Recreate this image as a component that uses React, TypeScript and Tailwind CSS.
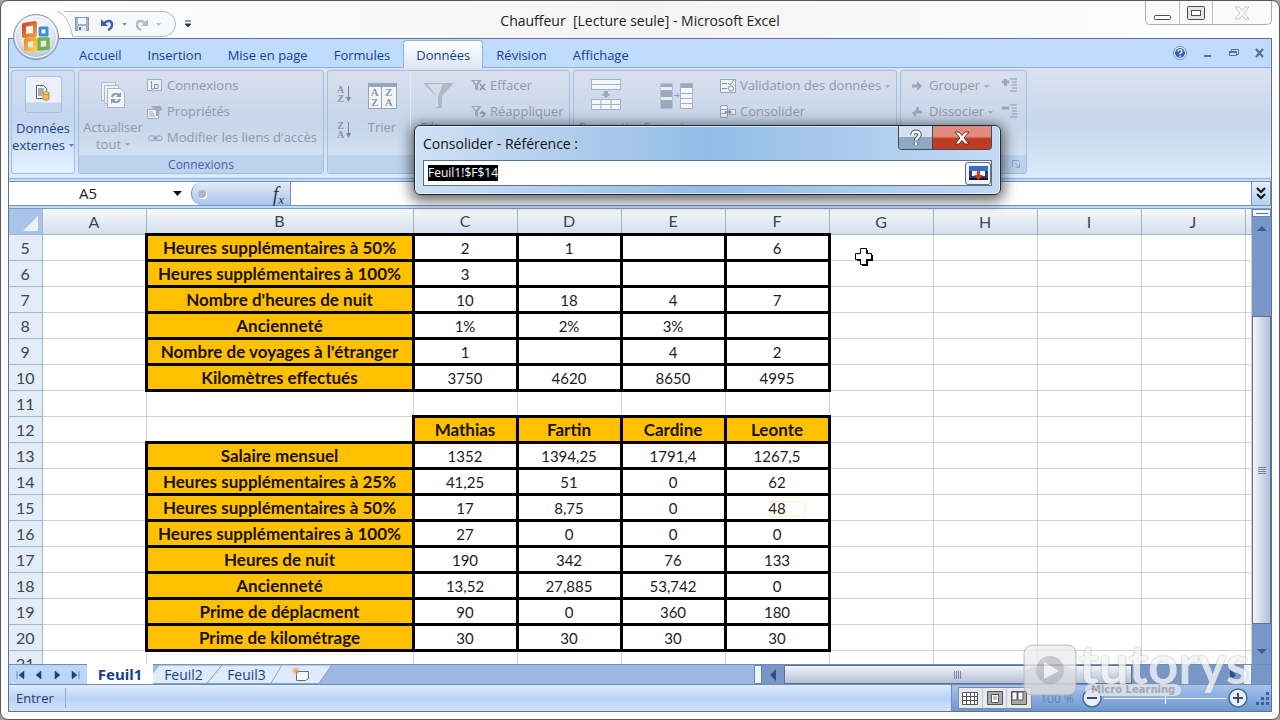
import React, { useEffect, useRef, useState } from "react";

const TABS = ["Accueil", "Insertion", "Mise en page", "Formules", "Données", "Révision", "Affichage"];
const COLUMNS = ["A", "B", "C", "D", "E", "F", "G", "H", "I", "J"];

interface Row {
  num: number;
  label?: string;
  values?: string[];
  header?: boolean;
}

const ROWS: Row[] = [
  { num: 5, label: "Heures supplémentaires à 50%", values: ["2", "1", "", "6"] },
  { num: 6, label: "Heures supplémentaires à 100%", values: ["3", "", "", ""] },
  { num: 7, label: "Nombre d'heures de nuit", values: ["10", "18", "4", "7"] },
  { num: 8, label: "Ancienneté", values: ["1%", "2%", "3%", ""] },
  { num: 9, label: "Nombre de voyages à l'étranger", values: ["1", "", "4", "2"] },
  { num: 10, label: "Kilomètres effectués", values: ["3750", "4620", "8650", "4995"] },
  { num: 11 },
  { num: 12, values: ["Mathias", "Fartin", "Cardine", "Leonte"], header: true },
  { num: 13, label: "Salaire mensuel", values: ["1352", "1394,25", "1791,4", "1267,5"] },
  { num: 14, label: "Heures supplémentaires à 25%", values: ["41,25", "51", "0", "62"] },
  { num: 15, label: "Heures supplémentaires à 50%", values: ["17", "8,75", "0", "48"] },
  { num: 16, label: "Heures supplémentaires à 100%", values: ["27", "0", "0", "0"] },
  { num: 17, label: "Heures de nuit", values: ["190", "342", "76", "133"] },
  { num: 18, label: "Ancienneté", values: ["13,52", "27,885", "53,742", "0"] },
  { num: 19, label: "Prime de déplacment", values: ["90", "0", "360", "180"] },
  { num: 20, label: "Prime de kilométrage", values: ["30", "30", "30", "30"] },
  { num: 21 },
];

export default function App() {
  return (
    <div className="h-screen min-h-[480px] overflow-hidden bg-neutral-400 font-['Open_Sans','Noto_Sans',sans-serif] text-[13px] text-[#15428b]">
      <div className="relative flex h-full flex-col rounded-lg border border-[#55585c] bg-[#fdfdfd] px-[7px] pb-[7px]">
        <TitleBar />
        <div className="flex min-h-0 flex-1 flex-col border border-[#5e7390] bg-[#bfdbff]">
          <RibbonTabs />
          <Ribbon />
          <FormulaBar />
          <div className="flex min-h-0 flex-1">
            <div className="min-w-0 flex-1 overflow-hidden bg-white">
              <Sheet />
            </div>
            <VerticalScrollbar />
          </div>
          <SheetBar />
          <StatusBar />
        </div>
        <ReferenceDialog />
        <Watermark />
        <CellCursor />
      </div>
    </div>
  );
}

// ── Title bar ─────────────────────────────────────────────────────────────
function TitleBar() {
  return (
    <header className="relative flex h-[37px] shrink-0 items-center bg-gradient-to-r from-white via-[#f4f4f4] to-white">
      <div className="absolute top-2.5 left-12 flex h-[26px] w-[120px] items-center gap-2 rounded-r-full border border-[#b4bac4] bg-[#f7f8fa] pl-[18px]">
        <button aria-label="Enregistrer">
          <SaveIcon />
        </button>
        <button aria-label="Annuler" className="ml-1 flex items-center gap-2">
          <UndoIcon color="#3b62b4" />
          <Caret color="#8490a5" />
        </button>
        <button aria-label="Rétablir" className="flex items-center gap-2">
          <UndoIcon color="#b3bccb" flip />
          <Caret color="#b8bec8" />
        </button>
      </div>
      {/* white crescent between the orb and the quick access bar */}
      <svg className="absolute top-2 left-9" width="30" height="29">
        <path d="M0 0h18q10 10 12 29H0z" fill="#fdfdfd" />
        <path d="M13 2.500q11 2 16 26" fill="none" stroke="#b4bac4" />
      </svg>
      <button aria-label="Personnaliser la barre" className="absolute top-[19px] left-[176px]">
        <svg width="8" height="8">
          <path d="M1 1h6M1 4h6L4 7z" stroke="#1f3c73" fill="#1f3c73" />
        </svg>
      </button>
      <button aria-label="Bouton Office" className="absolute top-3 left-1 z-10">
        <OfficeLogo />
      </button>
      <h1 className="w-full pt-0.5 text-center text-sm whitespace-pre text-[#222]">
        Chauffeur  [Lecture seule] - Microsoft Excel
      </h1>
      <div className="absolute top-0 right-0 flex h-6 rounded-b-[5px] border border-t-0 border-[#a9adb3] bg-[#fafafa]">
        <button aria-label="Réduire" className="grid w-[34px] place-items-center border-r border-[#b5b8bd]">
          <svg width="17" height="16">
            <rect x=".5" y="10.500" width="16" height="4" rx="1" fill="#fff" stroke="#4a4d55" />
          </svg>
        </button>
        <button aria-label="Agrandir" className="grid w-[33px] place-items-center border-r border-[#b5b8bd]">
          <svg width="18" height="14">
            <rect x=".5" y=".5" width="17" height="13" rx="1" fill="#e6e6e6" stroke="#4a4d55" />
            <rect x="4.500" y="4.500" width="9" height="5" fill="#fff" stroke="#4a4d55" />
          </svg>
        </button>
        <button aria-label="Fermer" className="grid w-[58px] place-items-center">
          <svg width="16" height="14">
            <path d="M1 1h4l3 3.500L11 1h4l-5 6 5 6h-4L8 9.500 5 13H1l5-6z" fill="#fff" stroke="#c3c5c8" />
          </svg>
        </button>
      </div>
    </header>
  );
}

function Caret({ color = "#8c96a6" }: { color?: string }) {
  return (
    <svg width="5" height="3" className="inline-block shrink-0">
      <path d="M0 0h5L2.500 3z" fill={color} />
    </svg>
  );
}

function SaveIcon() {
  return (
    <svg width="14" height="14">
      <rect x=".5" y=".5" width="13" height="13" fill="#a3b1cc" stroke="#8493b1" />
      <rect x="3" y="1" width="8" height="6" fill="#f3f6fb" />
      <rect x="3" y="9" width="8" height="5" fill="#dfe5ef" />
      <rect x="4" y="10" width="2" height="3" fill="#5c6f94" />
    </svg>
  );
}

function UndoIcon({ color, flip }: { color: string; flip?: boolean }) {
  return (
    <svg width="13" height="13" className={flip ? "-scale-x-100" : ""}>
      <path d="M3 5.500C6 1.500 11 2.500 11 6.500c0 2.500-1.500 4.500-4 5.500" fill="none" stroke={color} strokeWidth="2.400" />
      <path d="M0 1v7h7z" fill={color} />
    </svg>
  );
}

function OfficeLogo() {
  return (
    <svg width="48" height="48" viewBox="0 0 48 48">
      <defs>
        <radialGradient id="orb" cx=".5" cy=".35" r=".65">
          <stop offset="0" stopColor="#fff" />
          <stop offset=".6" stopColor="#e2e7ef" />
          <stop offset="1" stopColor="#a9b8cf" />
        </radialGradient>
        <linearGradient id="red" x2="1" y2="1">
          <stop offset="0" stopColor="#c9452a" />
          <stop offset="1" stopColor="#f59a3c" />
        </linearGradient>
        <linearGradient id="yellow" x2="1" y2="1">
          <stop offset="0" stopColor="#f08c2a" />
          <stop offset="1" stopColor="#f8d43c" />
        </linearGradient>
      </defs>
      <circle cx="24" cy="24" r="22.500" fill="url(#orb)" stroke="#8593ab" />
      <circle cx="24" cy="24" r="20.500" fill="none" stroke="#fff" />
      <g fill="none" strokeLinejoin="round">
        <path d="M12 12l11-2v12l-11 1z" stroke="url(#red)" strokeWidth="4" />
        <path d="M28 15h7v7h-7z" stroke="#3c8fcf" strokeWidth="3" />
        <path d="M14 27l9-1v11l-9-1z" stroke="url(#yellow)" strokeWidth="4" />
        <path d="M27 26h9v9l-9 1z" stroke="#72b244" strokeWidth="3.500" />
      </g>
    </svg>
  );
}

// ── Ribbon ────────────────────────────────────────────────────────────────
function RibbonTabs() {
  const [active, setActive] = useState("Données");
  return (
    <nav className="flex h-7 shrink-0 items-end pl-[57px]">
      {TABS.map((tab) => (
        <button
          key={tab}
          onClick={() => setActive(tab)}
          className={
            tab === active
              ? "relative -mb-px h-7 rounded-t-[4px] border border-b-0 border-[#8db2e3] bg-gradient-to-b from-white to-[#dde7f5] px-3 pt-[3px]"
              : "h-7 px-[13px] pt-[5px]"
          }
        >
          {tab}
        </button>
      ))}
      <div className="ml-auto flex h-7 items-center gap-4 pr-1.5">
        <button aria-label="Aide">
          <svg width="14" height="14">
            <circle cx="7" cy="7" r="6.500" fill="#fff" stroke="#5d85c4" />
            <circle cx="7" cy="7" r="5" fill="#2d62bd" />
            <path d="M5 5.500c0-2.500 4-2.500 4 0C9 7 7 6.500 7 8.300M7 9.500v1.500" fill="none" stroke="#fff" strokeWidth="1.400" />
          </svg>
        </button>
        <button aria-label="Réduire le classeur">
          <svg width="10" height="10">
            <path d="M1 8h7" stroke="#54719f" strokeWidth="2" />
          </svg>
        </button>
        <button aria-label="Restaurer le classeur">
          <svg width="10" height="10">
            <path d="M2.500 3V1.500h7v5H8M.5 3.500h7v4h-7z" fill="none" stroke="#5a6f94" />
            <path d="M0 3h8v2H0z" fill="#5a6f94" />
          </svg>
        </button>
        <button aria-label="Fermer le classeur">
          <svg width="10" height="10">
            <path d="M1 1l7 8M8 1L1 9" stroke="#5a6a85" strokeWidth="2" />
          </svg>
        </button>
      </div>
    </nav>
  );
}

function Group({
  title,
  launcher,
  className,
  children,
}: {
  title?: string;
  launcher?: boolean;
  className: string;
  children: React.ReactNode;
}) {
  return (
    <section
      className={`flex h-[104px] shrink-0 flex-col overflow-hidden rounded-[3px] border border-[#a6bddd] bg-gradient-to-b from-[#d8e0ee] via-[#c7d5ea] to-[#d8e6f7] ${className}`}
    >
      <div className="flex flex-1">{children}</div>
      <div className="flex h-[18px] items-center justify-center bg-[#bcd2ed]">
        {title && <h2 className="pt-0.5 text-xs text-[#3d65a5]">{title}</h2>}
        {launcher && (
          <button aria-label="Options du plan" className="mr-1.5 ml-auto">
            <svg width="8" height="8">
              <path d="M.5 7V.5H7M3 3l4 4M7.500 3.500v4h-4" fill="none" stroke="#8aa3c6" />
            </svg>
          </button>
        )}
      </div>
    </section>
  );
}

function SmallButton({ icon, label, caret }: { icon: React.ReactNode; label: string; caret?: boolean }) {
  return (
    <button className="flex h-[26px] items-center gap-1 whitespace-nowrap text-[#8f98a6]">
      <span className="grid w-4 place-items-center">{icon}</span>
      {label}
      {caret && <Caret color="#a3abb8" />}
    </button>
  );
}

function Ribbon() {
  return (
    <div className="flex h-28 shrink-0 gap-[3px] overflow-hidden border-y border-[#8db2e3] bg-gradient-to-b from-[#dbe3f0] via-[#c7d6eb] to-[#dcebfb] px-0.5 pt-0.5">
      <button className="flex h-[104px] w-16 shrink-0 flex-col items-center rounded-[3px] border border-[#9fc0e6] bg-gradient-to-b from-[#d2dff1] via-[#c3d6f1] to-[#e2f3ff] pt-[5px] leading-[17px]">
        <span className="mb-[7px] grid h-[37px] w-[37px] shrink-0 place-items-center rounded-[3px] border border-[#a9c0de] bg-gradient-to-b from-[#eaf1fb] from-70% to-[#c3d6ee] to-75% pb-1">
          <svg width="16" height="17">
            <path d="M1.500 1.500h7l3 3v10h-10z" fill="#fff" stroke="#555c68" />
            <path d="M3 5h6M3 7h6M3 9h5M3 11h4" stroke="#555c68" />
            <path d="M8 9v6c0 1.500 6 1.500 6 0V9z" fill="#edbd5a" stroke="#b98a2e" />
            <ellipse cx="11" cy="9" rx="3" ry="1.300" fill="#ffe3a0" stroke="#b98a2e" />
          </svg>
        </span>
        <span>Données</span>
        <span className="flex items-center gap-1">
          externes <Caret color="#5f7db0" />
        </span>
      </button>

      <Group title="Connexions" className="w-[246px]">
        <button className="flex w-[68px] shrink-0 flex-col items-center pt-2.5 leading-[17px] text-[#8f98a6]">
          <svg width="26" height="28" className="mb-[10px] shrink-0">
            <path d="M1.500 1.500h14v18h-14z" fill="#e9eef6" stroke="#b2bccb" />
            <path d="M4.500 4.500h14v18h-14z" fill="#eef2f8" stroke="#b2bccb" />
            <path d="M7.500 7.500h13l4 4v15h-17z" fill="#f5f7fb" stroke="#a8b3c4" />
            <path d="M12 16c1-4 6-4 8-1M20 18c-1 4-6 4-8 1" fill="none" stroke="#8b98ac" strokeWidth="2" />
            <path d="M21 11v5h-5zM11 23v-5h5z" fill="#8b98ac" />
          </svg>
          <span>Actualiser</span>
          <span className="flex items-center gap-1">
            tout <Caret color="#a3abb8" />
          </span>
        </button>
        <div className="pt-0.5">
          <SmallButton
            label="Connexions"
            icon={
              <svg width="16" height="15">
                <path d="M.5.5h14v11H8l-2 2v-2H.5z" fill="#e9eef5" stroke="#a1adbf" />
                <path d="M4.500 2v8h3V5M8 9.500h3v-4H8" fill="none" stroke="#8a97ab" />
              </svg>
            }
          />
          <SmallButton
            label="Propriétés"
            icon={
              <svg width="16" height="14">
                <path d="M.5 4.500h11v9H.5z" fill="#e9eef5" stroke="#a1adbf" />
                <path d="M2 7h4M2 9h5M2 11h6" stroke="#a1adbf" />
                <path d="M4 2l2-1h8l1 4-4 2v4H9V6L7 4z" fill="#9eaabd" />
              </svg>
            }
          />
          <SmallButton
            label="Modifier les liens d'accès"
            icon={
              <svg width="15" height="7">
                <rect x=".5" y="1" width="7" height="4.500" rx="2" fill="none" stroke="#94a0b3" />
                <rect x="7" y="1" width="7" height="4.500" rx="2" fill="none" stroke="#94a0b3" />
                <path d="M5 3.300h5" stroke="#7f8ca1" />
              </svg>
            }
          />
        </div>
      </Group>

      <Group className="w-[243px]">
        <div className="flex w-8 shrink-0 flex-col items-center gap-[18px] pt-3.5">
          <SortIcon first="A" second="Z" />
          <SortIcon first="Z" second="A" />
        </div>
        <button className="flex w-11 shrink-0 flex-col items-center pt-3 text-[#8f98a6]">
          <span className="mb-[9px] grid h-[26px] w-[29px] grid-cols-2 border border-t-4 border-[#98a4b8] bg-[#f2f5fa] font-['Liberation_Serif',serif] text-[11px] leading-[10px] font-bold">
            <span className="border-r border-[#98a4b8]">A<br />Z</span>
            <span>Z<br />A</span>
          </span>
          Trier
        </button>
        <button className="ml-1.5 flex w-14 shrink-0 flex-col items-center border-l border-[#e3ebf6] pt-3 text-[#8f98a6]">
          <svg width="31" height="26" className="mb-[9px] shrink-0">
            <path d="M0 0h31L19 13v12h-6V13z" fill="#aeb9ca" />
            <path d="M4 1h16l-5 12v11h-2V12z" fill="#d6dde8" />
          </svg>
          Filtrer
        </button>
        <div className="pt-0.5 pl-1">
          <SmallButton label="Effacer" icon={<FilterIcon mark="M9 5l5 6M14 5l-5 6" />} />
          <SmallButton label="Réappliquer" icon={<FilterIcon mark="M9 8h5M11 6l3 3-3 3" />} />
        </div>
      </Group>

      <Group className="w-[324px]">
        <button className="flex w-16 shrink-0 flex-col items-center pt-2 text-[#8f98a6]">
          <svg width="31" height="32" className="mb-[7px] shrink-0">
            <path d="M.5.5h29v10H.5z" fill="#f3f6fa" stroke="#a5b0c2" />
            <path d="M0 5.500h30" stroke="#a5b0c2" />
            <path d="M13 12h4v3h3l-5 4-5-4h3z" fill="#9aa6b9" />
            <path d="M.5 20.500h29v10H.5zM10 20v10M20 20v10M0 25.500h30" fill="#f3f6fa" stroke="#a5b0c2" />
          </svg>
          Convertir
        </button>
        <button className="flex w-[76px] shrink-0 flex-col items-center pt-3 text-[#8f98a6]">
          <svg width="33" height="28" className="mb-[7px] shrink-0">
            <path d="M.5.5h12v25H.5z" fill="#9ba8bd" />
            <path d="M1 5.500h11M1 15.500h11" stroke="#e9edf4" strokeWidth="3" />
            <path d="M14 12.500h5M17 10.500l2 2-2 2" fill="none" stroke="#8f9bb0" />
            <path d="M20.500.5h12v25h-12z" fill="#f4f7fb" stroke="#a5b0c2" />
            <path d="M21 1h11v4H21z" fill="#9ba8bd" />
            <path d="M21 10.500h11M21 15.500h11M21 20.500h11" stroke="#a5b0c2" />
          </svg>
          Supprimer
        </button>
        <div className="pt-0.5 pl-1.5">
          <SmallButton
            label="Validation des données"
            caret
            icon={
              <svg width="16" height="15">
                <path d="M.5.5h15v13H.5z" fill="#eef2f7" stroke="#96a2b6" />
                <path d="M2 4.500h5M2 9.500h5M8 4l2 2 4-5" fill="none" stroke="#7f8ca2" />
                <circle cx="11" cy="9.500" r="2.500" fill="none" stroke="#7f8ca2" />
              </svg>
            }
          />
          <SmallButton
            label="Consolider"
            icon={
              <svg width="16" height="14">
                <path d="M.5.5h7v12h-7zM1 4.500h6M1 8.500h6" fill="#eef2f7" stroke="#96a2b6" />
                <path d="M9.500 4.500h6v5h-6z" fill="#eef2f7" stroke="#96a2b6" />
                <path d="M5 6h4V4l3 3-3 3V8H5z" fill="#8593aa" />
              </svg>
            }
          />
        </div>
      </Group>

      <Group launcher className="w-[127px]">
        <div className="pt-0.5 pl-2">
          <SmallButton
            label="Grouper"
            caret
            icon={
              <svg width="11" height="10">
                <path d="M0 3.500h5V0l5 5-5 5V6.500H0z" fill="#98a7c0" />
              </svg>
            }
          />
          <SmallButton
            label="Dissocier"
            caret
            icon={
              <svg width="11" height="10">
                <path d="M10 3.500H7V0H4v3L0 6l4 4V6.500h6z" fill="#98a7c0" />
              </svg>
            }
          />
        </div>
        <div className="ml-auto flex flex-col gap-3 pt-[7px] pr-2">
          <DetailIcon plus />
          <DetailIcon />
        </div>
      </Group>
    </div>
  );
}

function SortIcon({ first, second }: { first: string; second: string }) {
  return (
    <button
      aria-label={`Trier de ${first} à ${second}`}
      className="flex items-center gap-0.5 font-['Liberation_Serif',serif] text-[10px] leading-[9px] font-bold text-[#8793a8]"
    >
      <span>{first}<br />{second}</span>
      <svg width="5" height="16">
        <path d="M2.500 0v13" stroke="#7a879d" />
        <path d="M0 11h5l-2.500 5z" fill="#7a879d" />
      </svg>
    </button>
  );
}

function FilterIcon({ mark }: { mark: string }) {
  return (
    <svg width="15" height="15">
      <path d="M0 1h11L7 6v6l-3-2V6z" fill="#9aa7ba" />
      <path d="M3 2h4L5 5z" fill="#e4eaf3" />
      <path d={mark} fill="none" stroke="#8492a8" strokeWidth="1.500" />
    </svg>
  );
}

function DetailIcon({ plus }: { plus?: boolean }) {
  return (
    <button aria-label={plus ? "Afficher les détails" : "Masquer les détails"}>
      <svg width="16" height="14">
        <path d="M8 1h7M10 4h5M10 7h5M10 10h5M8 13h7" stroke="#8b98ae" />
        <path d={plus ? "M0 4h7M3.500 1v7" : "M0 4h7"} stroke="#98a5bb" strokeWidth="3" />
      </svg>
    </button>
  );
}

// ── Formula bar ───────────────────────────────────────────────────────────
function FormulaBar() {
  return (
    <div className="flex h-[30px] shrink-0 items-start border-b border-[#7f9dbd] pt-0.5">
      <div className="flex h-[25px] w-[182px] items-center border-y border-[#7a93b5] bg-white">
        <input
          aria-label="Zone Nom"
          defaultValue="A5"
          className="w-[158px] bg-transparent text-center text-[15px] text-[#222] outline-none"
        />
        <button aria-label="Liste des noms" className="px-1.5">
          <svg width="9" height="5">
            <path d="M0 0h9L4.500 5z" fill="#111" />
          </svg>
        </button>
      </div>
      <div className="flex h-[25px] w-[99px] items-center border-y border-[#7a93b5] bg-white">
        <div className="flex h-[23px] w-full items-center justify-between rounded-l-full border-l border-[#7a93b5] bg-gradient-to-b from-[#e4edf9] to-[#a9c4ec] pr-1.5 pl-1.5">
          <span className="h-2 w-2 rounded-full bg-[#aab7cb] shadow-[1px_1px_0_#fff]" />
          <button aria-label="Insérer une fonction" className="font-['Liberation_Serif',serif] text-xl leading-5 text-[#333a4a] italic">
            f<sub className="text-[13px]">x</sub>
          </button>
        </div>
      </div>
      <input
        aria-label="Barre de formule"
        className="h-[25px] min-w-0 flex-1 border border-[#7a93b5] bg-white px-1 text-[#222] outline-none"
      />
      <button
        aria-label="Développer la barre de formule"
        className="grid h-[25px] w-[19px] place-items-center border border-l-0 border-[#7a93b5] bg-gradient-to-b from-[#e7f0fc] to-[#b6cff0]"
      >
        <svg width="10" height="13">
          <path d="M1 1l4 4 4-4M1 7l4 4 4-4" fill="none" stroke="#111" strokeWidth="2" />
        </svg>
      </button>
    </div>
  );
}

// ── Sheet ─────────────────────────────────────────────────────────────────
function Sheet() {
  const head = "border-r border-b border-[#9eb6ce] bg-gradient-to-b from-[#f6f9fc] to-[#d5deea] p-0 font-normal";
  const plain = "border border-[#d0d2d6] p-0";
  const boxed = "border-[3px] border-black p-0";
  const title = "border-[3px] border-black bg-[#ffc000] p-0 text-[17px] font-bold text-[#1a1200]";
  return (
    <table className="w-full table-fixed border-collapse text-center font-['Lato','Liberation_Sans',sans-serif] text-[15px] leading-5 text-[#1c1c1c]">
      <colgroup>
        <col className="w-[33px]" />
        <col className="w-[104px]" />
        <col className="w-[267px]" />
        {COLUMNS.slice(2).map((c) => (
          <col key={c} className="w-[104px]" />
        ))}
        <col />
      </colgroup>
      <thead>
        <tr className="h-6 text-base text-[#3b4656]">
          <th className="border-r border-b border-[#9eb6ce] bg-[#a9c4e9] p-0" aria-label="Tout sélectionner">
            <svg width="15" height="15" className="mt-1 ml-3.5">
              <path d="M15 0v15H0z" fill="#e9f1fb" />
            </svg>
          </th>
          {COLUMNS.map((c) => (
            <th key={c} scope="col" className={head}>
              {c}
            </th>
          ))}
          <td className={head} />
        </tr>
      </thead>
      <tbody>
        {ROWS.map((row) => (
          <tr key={row.num} className="h-[26px]">
            <th scope="row" className="border-r border-b border-[#9eb6ce] bg-[#e4ecf7] p-0 text-base leading-5 font-normal text-[#3b4656]">
              {row.num}
            </th>
            <td className={plain} />
            <td className={row.label ? title : plain}>{row.label}</td>
            {[0, 1, 2, 3].map((i) => (
              <td key={i} className={row.header ? title : row.values ? boxed : plain}>
                {row.num === 15 && i === 3 ? (
                  <span className="relative isolate">
                    {row.values?.[i]}
                    <span className="absolute top-0.5 left-0.5 -z-10 h-4 w-[35px] border border-[#fbf6b4]" />
                  </span>
                ) : (
                  row.values?.[i]
                )}
              </td>
            ))}
            {[4, 5, 6, 7, 8].map((i) => (
              <td key={i} className={plain} />
            ))}
          </tr>
        ))}
      </tbody>
    </table>
  );
}

function VerticalScrollbar() {
  return (
    <div className="flex w-[19px] shrink-0 flex-col items-center bg-[#7897c6]">
      <div className="grid h-2 w-full place-items-center border border-[#6b86ad] bg-[#f3f8fe]">
        <span className="h-px w-3 bg-[#5b7399]" />
      </div>
      <button aria-label="Défiler vers le haut" className="grid h-6 w-full place-items-center">
        <Arrow d="M0 6l5-5 5 5z" />
      </button>
      <div className="flex min-h-0 w-full flex-1 flex-col">
        <div className="flex-[75]" />
        <div className="grid w-full flex-[306] place-items-center border border-[#5b7399] bg-gradient-to-r from-[#f3f6fb] to-[#b3bfd6]">
          <svg width="8" height="8">
            <path d="M0 1.500h8M0 3.500h8M0 5.500h8M0 7.500h8" stroke="#7b859b" />
          </svg>
        </div>
        <div className="flex-[16]" />
      </div>
      <button aria-label="Défiler vers le bas" className="grid h-6 w-full place-items-center">
        <Arrow d="M0 1h10L5 6z" />
      </button>
    </div>
  );
}

function Arrow({ d }: { d: string }) {
  return (
    <svg width="10" height="10" viewBox="0 0 10 8">
      <path d={d} fill="#3d5a8c" />
    </svg>
  );
}

// ── Sheet tabs and horizontal scroll ──────────────────────────────────────
function SheetBar() {
  return (
    <div className="flex h-5 shrink-0 border-t border-[#6f8db8] bg-[#9db8e1]">
      <div className="flex w-[78px] shrink-0 items-center justify-around bg-[#bdd5f8] px-0.5">
        {[
          ["Première feuille", "M1 0v8M8 0L3 4l5 4z"],
          ["Feuille précédente", "M7 0L2 4l5 4z"],
          ["Feuille suivante", "M2 0l5 4-5 4z"],
          ["Dernière feuille", "M8 0v8M1 0l5 4-5 4z"],
        ].map(([label, d]) => (
          <button key={label} aria-label={label}>
            <svg width="9" height="8">
              <path d={d} fill="#15428b" />
              <path d={d} stroke="#15428b" strokeWidth=".5" fill="none" />
            </svg>
          </button>
        ))}
      </div>
      <button className="relative z-10 -mt-px h-5 w-[66px] shrink-0 bg-white font-['Noto_Sans',sans-serif] text-[15px] leading-5 font-bold">
        Feuil1
      </button>
      <SheetTab>Feuil2</SheetTab>
      <SheetTab>Feuil3</SheetTab>
      <SheetTab label="Insérer une feuille">
        <svg width="18" height="15" className="mx-auto">
          <path d="M4.500 4.500h12v7l-3 2h-9z" fill="#f5f8fc" stroke="#586f98" />
          <path d="M4 0v8M0 4h8M1 1l6 6M7 1L1 7" stroke="#f0a03a" />
        </svg>
      </SheetTab>
      <div className="ml-auto flex w-[517px] shrink">
        <div className="w-2 shrink-0 border border-[#6b86ad] bg-[#eff5fd]" />
        <button aria-label="Défiler vers la gauche" className="grid w-[22px] shrink-0 place-items-center bg-[#7897c6]">
          <svg width="6" height="12">
            <path d="M6 0v12L0 6z" fill="#2f4f88" />
          </svg>
        </button>
        <div className="grid w-[348px] place-items-center border border-[#5b7399] bg-gradient-to-b from-[#f0f3f9] to-[#b6c0d5]">
          <svg width="8" height="8">
            <path d="M.5 0v8M2.500 0v8M4.500 0v8M6.500 0v8" stroke="#7b859b" />
          </svg>
        </div>
        <div className="flex flex-1 items-center justify-end bg-[#7897c6] pr-5">
          <button aria-label="Défiler vers la droite" className="mr-2">
            <svg width="6" height="12">
              <path d="M0 0l6 6-6 6z" fill="#2f4f88" />
            </svg>
          </button>
          <span className="h-full w-[7px] bg-[#eff5fd]" />
        </div>
      </div>
    </div>
  );
}

function SheetTab({ children, label }: { children: React.ReactNode; label?: string }) {
  return (
    <button aria-label={label} className={`relative -ml-1.5 h-[19px] shrink-0 text-sm leading-5 ${label ? "w-[52px]" : "w-[69px]"}`}>
      <svg className="absolute inset-0 h-full w-full overflow-visible" viewBox="0 0 69 19" preserveAspectRatio="none">
        <path d="M-3 18.500L12 0h66L63 16q-1 2.500-3 2.500z" fill="#dfebfc" stroke="#7f9dc9" />
      </svg>
      <span className="relative block pl-1">{children}</span>
    </button>
  );
}

// ── Status bar ────────────────────────────────────────────────────────────
function StatusBar() {
  const view = "grid h-full w-6 place-items-center border-r border-[#c3c9d4] last:border-r-0";
  return (
    <footer className="flex h-[27px] shrink-0 items-center border-t border-[#6f8db8] bg-gradient-to-b from-[#dfecfd] via-[#b8d2f7] to-[#d3e3fa] pl-[7px] text-[#24406f]">
      <span className="flex h-5 w-[50px] items-center border-r border-[#8eabd6] pt-0.5">Entrer</span>
      <div className="ml-auto flex h-full items-center border-l border-[#6f8db8] bg-gradient-to-b from-[#a5c3ee] to-[#6f97d0] pl-1.5">
        <div className="flex h-[22px] border border-[#7d8aa3] bg-[#e8e9ec]">
          <button aria-label="Normal" className={view}>
            <svg width="17" height="13">
              <path d="M.5.5h15v12H.5zM0 4.500h16M0 8.500h16M4.500 0v12M8.500 0v12M12.500 0v12" fill="#fff" stroke="#555" />
            </svg>
          </button>
          <button aria-label="Mise en page" className={view}>
            <svg width="16" height="14">
              <path d="M.5.5h15v13H.5z" fill="#aaa" stroke="#555" />
              <path d="M4.500 3.500h7v8h-7z" fill="#fff" stroke="#555" />
              <path d="M6 6h4M6 8h4" stroke="#888" />
            </svg>
          </button>
          <button aria-label="Aperçu des sauts de page" className={view}>
            <svg width="16" height="14">
              <path d="M.5.5h15v13H.5z" fill="#aaa" stroke="#555" />
              <path d="M1 1h5v8H1zM7 1h5v8H7z" fill="#fff" stroke="#555" />
            </svg>
          </button>
        </div>
        <span className="w-[50px] pt-0.5 text-center text-xs text-[#6681ad]">100 %</span>
        <button aria-label="Zoom arrière">
          <ZoomSign d="M5 10h10" />
        </button>
        <input
          type="range"
          aria-label="Zoom"
          defaultValue={50}
          className="mx-0.5 h-3 w-[122px] appearance-none bg-[linear-gradient(#e4eefc,#e4eefc)] bg-[length:100%_1px] bg-center bg-no-repeat [&::-webkit-slider-thumb]:h-3 [&::-webkit-slider-thumb]:w-px [&::-webkit-slider-thumb]:appearance-none [&::-webkit-slider-thumb]:bg-white"
        />
        <button aria-label="Zoom avant">
          <ZoomSign d="M5 10h10M10 5v10" />
        </button>
        <svg width="14" height="14" className="mr-px ml-2">
          <path d="M10 1h3v3h-3zM10 6h3v3h-3zM5 6h3v3H5zM10 11h3v3h-3zM5 11h3v3H5zM0 11h3v3H0z" fill="#3d619c" />
        </svg>
      </div>
    </footer>
  );
}

function ZoomSign({ d }: { d: string }) {
  return (
    <svg width="20" height="20">
      <circle cx="10" cy="10" r="9" fill="#e9f0fa" stroke="#4b6896" strokeWidth="1.500" />
      <path d={d} stroke="#3c4b66" strokeWidth="2" />
    </svg>
  );
}

// ── Reference picker dialog ───────────────────────────────────────────────
function ReferenceDialog() {
  const [reference, setReference] = useState("Feuil1!$F$14");
  const inputRef = useRef<HTMLInputElement>(null);

  useEffect(() => {
    inputRef.current?.focus();
    inputRef.current?.select();
  }, []);

  return (
    <div
      role="dialog"
      aria-labelledby="dialog-title"
      className="absolute top-[124px] left-[413px] z-20 h-[70px] w-[587px] rounded-md border border-[#1e2938] bg-gradient-to-r from-[#cfe0f3] via-[#93bce6] to-[#c3daf3] px-2 shadow-[0_3px_14px_3px_rgba(0,0,0,0.6)] ring-1 ring-white/60 ring-inset"
    >
      <div className="flex h-[34px] items-center">
        <label id="dialog-title" htmlFor="reference" className="pt-0.5 text-sm text-[#111]">
          Consolider - Référence :
        </label>
        <div className="ml-auto flex h-6 self-start overflow-hidden rounded-b-[4px] border border-t-0 border-[#3d4a5c]">
          <button aria-label="Aide" className="grid w-[34px] place-items-center border-r border-[#3d4a5c] bg-gradient-to-b from-[#d5e1ee] from-50% to-[#8fa9c4] to-50%">
            <svg width="14" height="18">
              <path d="M3.500 6c0-4.500 7-4.500 7 0 0 2.500-3.500 2.500-3.500 5.500M7 13.500v2.500" fill="none" stroke="#4b5360" strokeWidth="4.500" />
              <path d="M3.500 6c0-4.500 7-4.500 7 0 0 2.500-3.500 2.500-3.500 5.500M7 13.500v2.500" fill="none" stroke="#fff" strokeWidth="2.500" />
            </svg>
          </button>
          <button aria-label="Fermer" className="grid w-[58px] place-items-center bg-gradient-to-b from-[#e08b7d] from-45% to-[#c13a22] to-55%">
            <svg width="16" height="14">
              <path d="M1 1h4l3 3.500L11 1h4l-5 6 5 6h-4L8 9.500 5 13H1l5-6z" fill="#fff" stroke="#5a3434" />
            </svg>
          </button>
        </div>
      </div>
      <div className="flex h-[26px] items-center border border-[#5f6f84] bg-white pl-1">
        <input
          id="reference"
          ref={inputRef}
          value={reference}
          onChange={(e) => setReference(e.target.value)}
          className="h-4 min-w-0 flex-1 bg-transparent text-xs leading-4 text-black outline-none selection:bg-black selection:text-white"
        />
        <button aria-label="Développer la boîte de dialogue" className="grid h-[23px] w-[26px] place-items-center rounded-[3px] border border-[#5f6f84] bg-[#eef1f6]">
          <svg width="19" height="14">
            <path d="M0 0h19v14H0z" fill="#2b3f78" />
            <path d="M0 0h19v5H0z" fill="#3a6ccc" />
            <path d="M3 5h13v5H3z" fill="#fff" />
            <path d="M0 13h19" stroke="#111" strokeWidth="2" />
            <path d="M8 5h3v4h3l-4.500 5L5 9h3z" fill="#d8371f" />
          </svg>
        </button>
      </div>
    </div>
  );
}

// ── Overlays ──────────────────────────────────────────────────────────────
function Watermark() {
  return (
    <div className="pointer-events-none absolute right-[30px] bottom-[23px] z-30 flex items-start gap-0.5 opacity-80">
      <svg width="54" height="52">
        <rect x="1" y="1" width="52" height="50" rx="8" fill="#dcdcde" stroke="#b4b4b8" />
        <path d="M2 26c18-8 34-8 50 0V10q0-8-8-8H10q-8 0-8 8z" fill="#ededef" />
        <circle cx="27" cy="26" r="14" fill="#bcbcc2" />
        <path d="M21 18v17l15-8z" fill="#f5f5f5" />
      </svg>
      <div className="flex flex-col items-start">
        <span className="font-['Lato',sans-serif] text-[53px] leading-10 font-bold text-[#f3f3f5] [text-shadow:0_0_2px_#8c8c96]">tutorys</span>
        <span className="ml-1.5 rounded-full bg-[#e4e6ea] px-1.5 font-['DejaVu_Sans',sans-serif] text-[10px] leading-3 font-bold text-[#a3a5ac]">
          Micro Learning
        </span>
      </div>
    </div>
  );
}

function CellCursor() {
  return (
    <svg className="absolute top-[246px] left-[853px] z-20" width="20" height="20">
      <path d="M8 3h6v5h5v6h-5v5H8v-5H3V8h5z" fill="#000" />
      <path d="M6.500 1.500h6v5h5v6h-5v5h-6v-5h-5v-6h5z" fill="#fff" stroke="#000" />
    </svg>
  );
}
